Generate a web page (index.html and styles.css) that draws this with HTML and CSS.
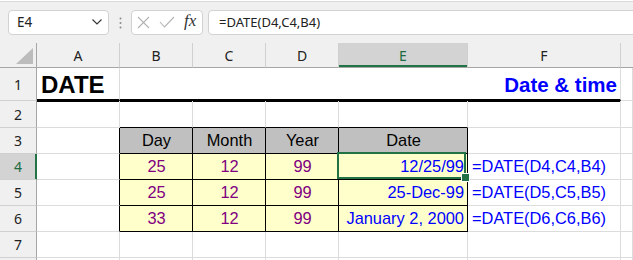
FILE: index.html
```html
<!DOCTYPE html>
<html lang="en">
<head>
    <meta charset="UTF-8">
    <title>DATE function</title>
    <link rel="stylesheet" href="styles.css">
</head>
<body>

    <!-- Formula bar -->
    <div class="strip"></div>
    <div class="toolbar">
        <div class="namebox">
            <span>E4</span>
            <svg width="10" height="6" viewBox="0 0 10 6"><path d="M0.5 0.5 L5 5 L9.5 0.5" fill="none" stroke="#333" stroke-width="1.1"/></svg>
        </div>
        <div class="grip">
            <svg width="3" height="12" viewBox="0 0 3 12"><circle cx="1.5" cy="1.5" r="1" fill="#8a8a8a"/><circle cx="1.5" cy="6" r="1" fill="#8a8a8a"/><circle cx="1.5" cy="10.5" r="1" fill="#8a8a8a"/></svg>
        </div>
        <div class="fxbox">
            <svg class="cancel" width="13" height="13" viewBox="0 0 13 13"><path d="M1 1 L12 12 M12 1 L1 12" stroke="#b3b3b3" stroke-width="1.1" fill="none"/></svg>
            <svg class="enter" width="16" height="12" viewBox="0 0 16 12"><path d="M1 6 L5.5 11 L15 1" stroke="#b3b3b3" stroke-width="1.1" fill="none"/></svg>
            <span class="fx">fx</span>
        </div>
        <div class="formula">=DATE(D4,C4,B4)</div>
    </div>

    <!-- Worksheet -->
    <div class="sheet">
        <!-- column headers -->
        <div class="corner"><span class="tri"></span></div>
        <div class="hd">A</div>
        <div class="hd">B</div>
        <div class="hd">C</div>
        <div class="hd">D</div>
        <div class="hd hd-sel">E</div>
        <div class="hd">F</div>
        <div class="hd hd-end"></div>

        <!-- row 1 -->
        <div class="rh">1</div>
        <div class="cell title-row title">DATE</div>
        <div class="cell title-row subtitle">Date &amp; time</div>
        <div class="cell"></div>

        <!-- row 2 -->
        <div class="rh">2</div>
        <div class="cell under-title"></div>
        <div class="cell under-title tbl-top"></div>
        <div class="cell under-title tbl-top"></div>
        <div class="cell under-title tbl-top"></div>
        <div class="cell under-title tbl-top"></div>
        <div class="cell under-title"></div>
        <div class="cell"></div>

        <!-- row 3 -->
        <div class="rh">3</div>
        <div class="cell tbl-left"></div>
        <div class="cell th">Day</div>
        <div class="cell th">Month</div>
        <div class="cell th">Year</div>
        <div class="cell th">Date</div>
        <div class="cell"></div>
        <div class="cell"></div>

        <!-- row 4 -->
        <div class="rh rh-sel">4</div>
        <div class="cell tbl-left"></div>
        <div class="cell td num">25</div>
        <div class="cell td num">12</div>
        <div class="cell td num">99</div>
        <div class="cell td date active">12/25/99</div>
        <div class="cell fn">=DATE(D4,C4,B4)</div>
        <div class="cell"></div>

        <!-- row 5 -->
        <div class="rh">5</div>
        <div class="cell tbl-left"></div>
        <div class="cell td num">25</div>
        <div class="cell td num">12</div>
        <div class="cell td num">99</div>
        <div class="cell td date">25-Dec-99</div>
        <div class="cell fn">=DATE(D5,C5,B5)</div>
        <div class="cell"></div>

        <!-- row 6 -->
        <div class="rh">6</div>
        <div class="cell tbl-left"></div>
        <div class="cell td num">33</div>
        <div class="cell td num">12</div>
        <div class="cell td num">99</div>
        <div class="cell td date">January 2, 2000</div>
        <div class="cell fn">=DATE(D6,C6,B6)</div>
        <div class="cell"></div>

        <!-- row 7 -->
        <div class="rh">7</div>
        <div class="cell"></div>
        <div class="cell"></div>
        <div class="cell"></div>
        <div class="cell"></div>
        <div class="cell"></div>
        <div class="cell"></div>
        <div class="cell"></div>

        <!-- row 8, only its top edge shows -->
        <div class="rh"></div>
        <div class="cell"></div>
        <div class="cell"></div>
        <div class="cell"></div>
        <div class="cell"></div>
        <div class="cell"></div>
        <div class="cell"></div>
        <div class="cell"></div>
    </div>

</body>
</html>
```

FILE: styles.css
```css
/* Page */
* {
    box-sizing: border-box;
}

body {
    margin: 0;
    background-color: #fff;
    font-family: 'Noto Sans', 'Liberation Sans', sans-serif;
    overflow: hidden;
}

/* Formula Bar */
.strip {
    height: 2px;
    background-color: #fff;
    border-bottom: 1px solid #d9d9d9;
}

.toolbar {
    display: flex;
    align-items: center;
    height: 41px;
    padding-left: 8px;
    padding-bottom: 1px;
    background-color: #f0f0f0;
}

.namebox,
.fxbox,
.formula {
    height: 25px;
    background-color: #fff;
    border: 1px solid #d2d2d2;
    border-radius: 4px;
    display: flex;
    align-items: center;
}

.namebox {
    width: 101px;
    justify-content: space-between;
    padding: 0 6px 0 8px;
    font-size: 13.5px;
    color: #222;
}

.grip {
    width: 22px;
    display: flex;
    justify-content: center;
    padding-top: 1px;
}

.fxbox {
    width: 72px;
    padding-left: 5px;
}

.cancel {
    margin-right: 9px;
}

.enter {
    margin-right: 9px;
}

.fx {
    font-family: 'Liberation Serif', serif;
    font-style: italic;
    font-size: 17px;
    color: #333;
    margin-top: -2px;
}

.formula {
    flex: 1;
    margin-left: 5px;
    margin-right: -6px;
    padding-left: 10px;
    font-size: 13px;
    color: #222;
}

/* Worksheet Grid */
.sheet {
    display: grid;
    grid-template-columns: 37px 83px 73px 73px 73px 129px 153px 1fr;
    grid-template-rows: 25px 33px 27px repeat(6, 26px);
}

.corner,
.hd,
.rh {
    background-color: #f0f0f0;
    color: #222;
    font-size: 14px;
    display: flex;
    align-items: center;
    justify-content: center;
}

.corner {
    border-right: 1px solid #a6a6a6;
    border-bottom: 1px solid #a6a6a6;
    position: relative;
}

.tri {
    position: absolute;
    right: 3px;
    bottom: 3px;
    width: 0;
    height: 0;
    border-left: 17px solid transparent;
    border-bottom: 16px solid #bcbcbc;
}

.hd {
    border-right: 1px solid #d0d0d0;
    border-bottom: 1px solid #a6a6a6;
    padding-top: 1px;
}

.hd-end {
    border-right: none;
}

.hd-sel {
    background-color: #d3d3d3;
    color: #1d6b40;
    box-shadow: inset 0 -2px 0 #217346;
}

.rh {
    border-right: 1px solid #a6a6a6;
    border-bottom: 1px solid #d0d0d0;
}

.rh-sel {
    background-color: #d3d3d3;
    color: #1d6b40;
    border-right-color: #217346;
    box-shadow: inset -1px 0 0 #217346;
}

/* Cells */
.cell {
    border-right: 1px solid #dcdcdc;
    border-bottom: 1px solid #dcdcdc;
    font-family: 'Liberation Sans', Arial, sans-serif;
    font-size: 16.4px;
    display: flex;
    align-items: center;
    padding: 0 3px 0 4px;
    white-space: nowrap;
}

.title-row {
    border-bottom: 2px solid #000;
    padding-top: 2px;
}

.title {
    font-size: 24px;
    font-weight: bold;
}

.subtitle {
    grid-column: span 5;
    justify-content: flex-end;
    font-size: 20.5px;
    font-weight: bold;
    color: #0000ff;
}

.under-title {
    box-shadow: inset 0 1px 0 #000;
}

.tbl-top {
    border-bottom-color: #000;
}

.tbl-left {
    border-right-color: #000;
}

.th {
    background-color: #c0c0c0;
    border-right-color: #000;
    border-bottom-color: #000;
    justify-content: center;
}

.td {
    background-color: #ffffcc;
    border-right-color: #000;
    border-bottom-color: #000;
}

.num {
    justify-content: center;
    color: #800080;
}

.date {
    justify-content: flex-end;
    color: #0000ff;
}

.fn {
    color: #0000ff;
}

/* Active cell frame */
.active {
    position: relative;
}

.active::after {
    content: "";
    position: absolute;
    left: -2px;
    top: -2px;
    right: 1px;
    bottom: 0;
    border: 2px solid #217346;
}

.active::before {
    content: "";
    position: absolute;
    right: -3px;
    bottom: -3px;
    width: 7px;
    height: 7px;
    background-color: #217346;
    border: 1px solid #fff;
    z-index: 1;
}
```
